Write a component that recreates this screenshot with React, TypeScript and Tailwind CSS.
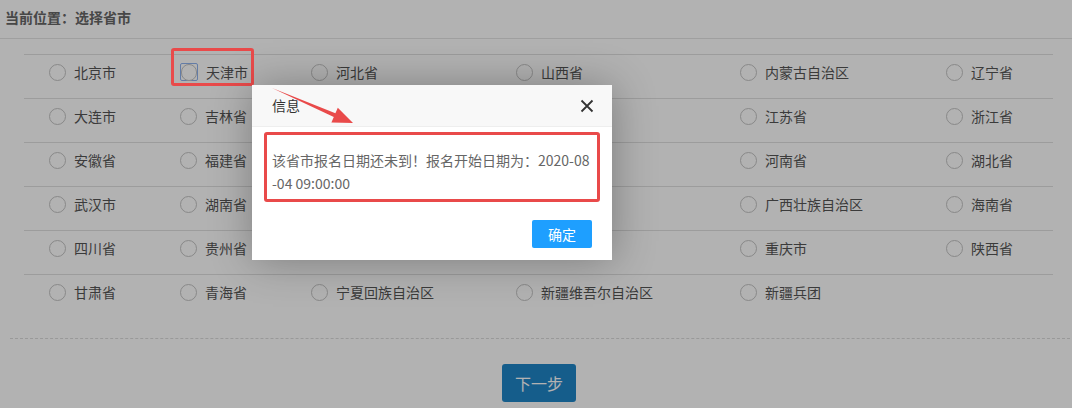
const rows: string[][] = [
  ["北京市", "天津市", "河北省", "山西省", "内蒙古自治区", "辽宁省"],
  ["大连市", "吉林省", "", "", "江苏省", "浙江省"],
  ["安徽省", "福建省", "", "", "河南省", "湖北省"],
  ["武汉市", "湖南省", "", "", "广西壮族自治区", "海南省"],
  ["四川省", "贵州省", "", "", "重庆市", "陕西省"],
  ["甘肃省", "青海省", "宁夏回族自治区", "新疆维吾尔自治区", "新疆兵团", null as unknown as string],
];

function Radio({ focused }: { focused?: boolean }) {
  return (
    <span
      className={
        focused
          ? "flex h-[18px] w-[18px] shrink-0 items-center justify-center rounded-[2px] border border-[#8fb2ee]"
          : "flex h-[17px] w-[17px] shrink-0 items-center justify-center"
      }
    >
      <span className="block h-[17px] w-[17px] rounded-full border border-[#c4c4c4] bg-white" />
    </span>
  );
}

export default function App() {
  return (
    <div
      className="relative h-[408px] w-[1072px] overflow-hidden bg-white text-[14px] text-[#555]"
      style={{ fontFamily: '"Noto Sans CJK SC", "Noto Sans", sans-serif' }}
    >
      {/* page underneath */}
      <div className="flex h-[39px] items-center border-b border-[#e4e4e4] pb-[4px] pl-[5px] font-bold text-[#666]">
        当前位置：选择省市
      </div>

      <div className="ml-[24px] mr-[19px] mt-[15px]">
        {rows.map((row, r) => (
          <div
            key={r}
            className="grid h-[44px] grid-cols-[131px_131px_205px_224px_206px_132px] items-center border-t border-[#e0e0e0] pb-[9px]"
          >
            {row.map((name, c) =>
              name === null ? (
                <div key={c} />
              ) : (
                <div key={c} className="flex items-center gap-[8px] pl-[25px] leading-[20px]">
                  <Radio focused={r === 0 && c === 1} />
                  {name && <span className="whitespace-nowrap">{name}</span>}
                </div>
              )
            )}
          </div>
        ))}
      </div>

      <div className="ml-[10px] mr-[2px] mt-[20px] border-t border-dashed border-[#dcdcdc]" />

      <div className="mt-[25px] flex justify-center pl-[6px]">
        <button className="h-[38px] w-[74px] rounded-[3px] bg-[#1f86c8] text-[16px] text-white">
          下一步
        </button>
      </div>

      {/* shade */}
      <div className="absolute inset-0 bg-black/30" />

      {/* annotation around 天津市 */}
      <div className="absolute left-[171px] top-[48px] h-[38px] w-[83px] rounded-[3px] border-[3px] border-[#e94a4a]" />

      {/* dialog */}
      <div className="absolute left-[252px] top-[85px] flex h-[175px] w-[360px] flex-col bg-white shadow-[1px_1px_40px_rgba(0,0,0,0.3)]">
        <div className="flex h-[42px] items-center justify-between border-b border-[#eee] bg-[#f8f8f8] pl-[20px] pr-[18px] text-[#333]">
          <span>信息</span>
          <svg width="14" height="14" viewBox="0 0 14 14">
            <path d="M1.5 1.5 L12.5 12.5 M12.5 1.5 L1.5 12.5" stroke="#333" strokeWidth="1.8" />
          </svg>
        </div>
        <div className="mx-[12px] mt-[5px] h-[70px] rounded-[3px] border-[3px] border-[#e94a4a] pl-[5px] pt-[14px] leading-[23px] text-[#666]">
          <div className="whitespace-nowrap">该省市报名日期还未到！报名开始日期为：2020-08</div>
          <div className="whitespace-nowrap">-04 09:00:00</div>
        </div>
        <div className="flex justify-end pr-[20px] pt-[18px]">
          <button className="h-[28px] w-[60px] rounded-[2px] bg-[#1e9fff] text-[14px] text-white">
            确定
          </button>
        </div>
      </div>

      {/* arrow */}
      <svg className="pointer-events-none absolute left-0 top-0" width="1072" height="408" viewBox="0 0 1072 408">
        <polygon
          points="272,88 335.4,113.3 337.8,107.8 353,123 331.4,122.4 333.8,116.9"
          fill="#e94a4a"
        />
      </svg>
    </div>
  );
}
